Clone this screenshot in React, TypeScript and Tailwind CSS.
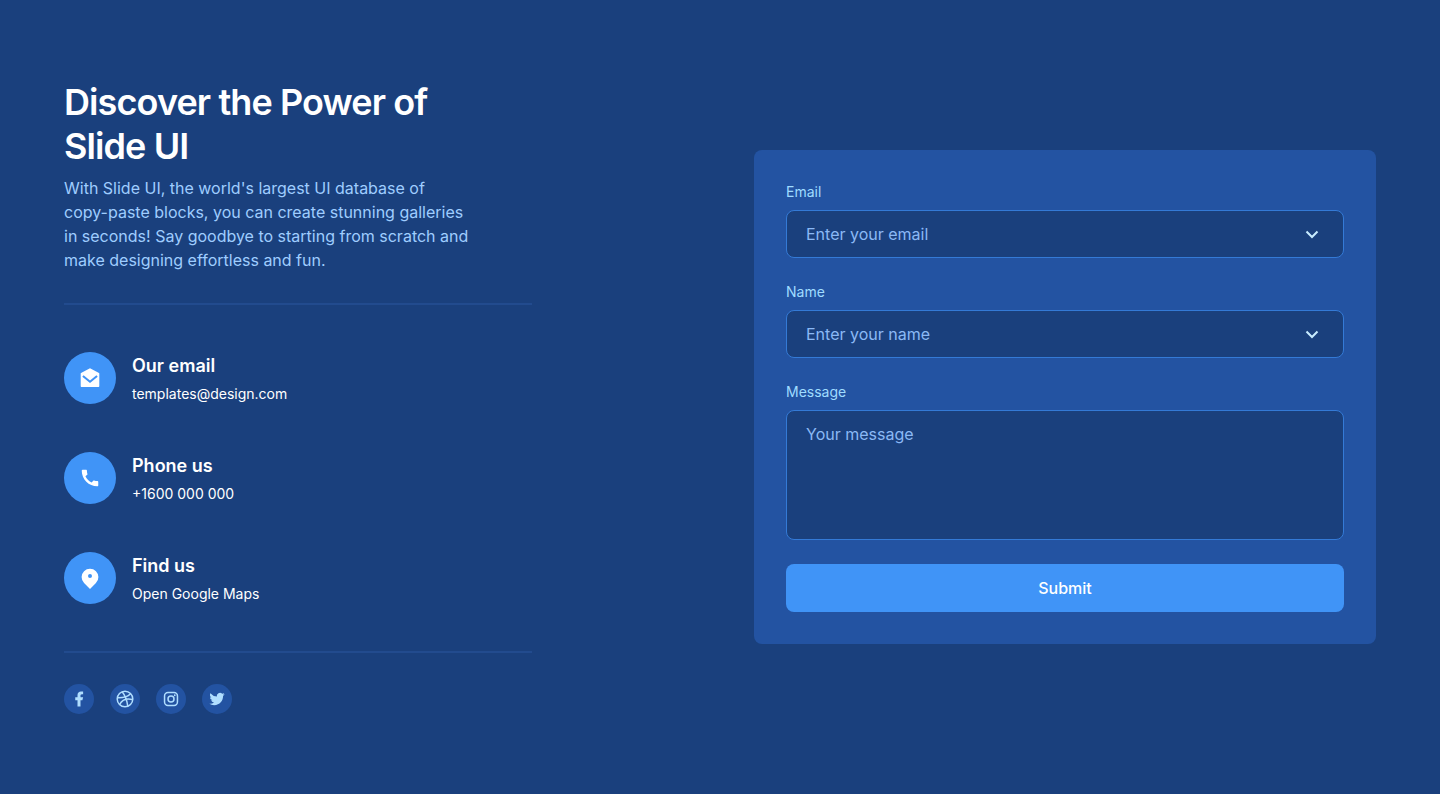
import React, { useState } from 'react';

const contacts = [
  {
    title: 'Our email',
    text: 'templates@design.com',
    href: 'mailto:templates@design.com',
    icon: (
      <svg className="w-6 h-6" viewBox="0 0 24 24" fill="currentColor" aria-hidden="true">
        <path fillRule="evenodd" d="M12 2.2 21 7.1c.2.1.3.3.3.5V20c0 .6-.4 1-1 1H3.7c-.6 0-1-.4-1-1V7.6c0-.2.1-.4.3-.5L12 2.2ZM5.6 9.2 4.3 10.8 12 17l7.7-6.2-1.3-1.6L12 14.4 5.6 9.2Z" />
      </svg>
    ),
  },
  {
    title: 'Phone us',
    text: '+1600 000 000',
    href: 'tel:+1600000000',
    icon: (
      <svg className="w-[22px] h-[22px]" viewBox="0 0 24 24" fill="currentColor" aria-hidden="true">
        <path d="M20.01 15.38c-1.23 0-2.42-.2-3.53-.56a.977.977 0 0 0-1.01.24l-1.57 1.97c-2.83-1.35-5.48-3.9-6.89-6.83l1.95-1.66c.27-.28.35-.67.24-1.02-.37-1.11-.56-2.3-.56-3.53 0-.54-.45-.99-.99-.99H4.19C3.65 3 3 3.24 3 3.99 3 13.28 10.73 21 20.01 21c.71 0 .99-.63.99-1.18v-3.45c0-.54-.45-.99-.99-.99Z" />
      </svg>
    ),
  },
  {
    title: 'Find us',
    text: 'Open Google Maps',
    href: '#maps',
    icon: (
      <svg className="w-6 h-6" viewBox="0 0 24 24" fill="currentColor" aria-hidden="true">
        <path fillRule="evenodd" d="M17.94 17.04 12 22.98l-5.94-5.94a8.4 8.4 0 1 1 11.88 0ZM12 12a2 2 0 1 0 0-4 2 2 0 0 0 0 4Z" />
      </svg>
    ),
  },
];

const socials = [
  {
    name: 'Facebook',
    icon: (
      <svg className="w-[18px] h-[18px]" viewBox="0 0 24 24" fill="currentColor" aria-hidden="true">
        <path d="M14 13.5h2.5l1-4H14v-2c0-1.03 0-2 2-2h1.5V2.14c-.326-.043-1.557-.14-2.857-.14C11.928 2 10 3.657 10 6.7v2.8H7v4h3V22h4v-8.5Z" />
      </svg>
    ),
  },
  {
    name: 'Dribbble',
    icon: (
      <svg className="w-[18px] h-[18px]" viewBox="0 0 24 24" fill="none" stroke="currentColor" strokeWidth="2" aria-hidden="true">
        <circle cx="12" cy="12" r="10.4" />
        <path d="M8.2 2.4c3.8 4.6 6.2 10 7.5 19M1.9 10.4c6.6.2 13-.8 17.5-5.4M4.8 19.4c3-5.8 9.6-8.6 17.4-6.6" />
      </svg>
    ),
  },
  {
    name: 'Instagram',
    icon: (
      <svg className="w-[18px] h-[18px]" viewBox="0 0 24 24" fill="none" stroke="currentColor" strokeWidth="2" aria-hidden="true">
        <rect x="3.4" y="3.4" width="17.2" height="17.2" rx="4.6" />
        <circle cx="12" cy="12" r="4" />
        <circle cx="17" cy="7" r="1.2" fill="currentColor" stroke="none" />
      </svg>
    ),
  },
  {
    name: 'Twitter',
    icon: (
      <svg className="w-[18px] h-[18px]" viewBox="0 0 24 24" fill="currentColor" aria-hidden="true">
        <path d="M22.162 5.656a8.384 8.384 0 0 1-2.402.658A4.196 4.196 0 0 0 21.6 4c-.82.488-1.719.83-2.656 1.015a4.182 4.182 0 0 0-7.126 3.814 11.874 11.874 0 0 1-8.62-4.37 4.168 4.168 0 0 0-.566 2.103c0 1.45.738 2.731 1.86 3.481a4.168 4.168 0 0 1-1.894-.523v.052a4.185 4.185 0 0 0 3.355 4.101 4.21 4.21 0 0 1-1.89.072A4.185 4.185 0 0 0 7.97 16.65a8.394 8.394 0 0 1-6.191 1.732 11.83 11.83 0 0 0 6.41 1.88c7.693 0 11.9-6.373 11.9-11.9 0-.18-.005-.362-.013-.54a8.496 8.496 0 0 0 2.087-2.165Z" />
      </svg>
    ),
  },
];

const fields = [
  { id: 'email', label: 'Email', type: 'email', placeholder: 'Enter your email' },
  { id: 'name', label: 'Name', type: 'text', placeholder: 'Enter your name' },
];

const App: React.FC = () => {
  const [values, setValues] = useState<Record<string, string>>({ email: '', name: '', message: '' });

  const update = (id: string, value: string) => setValues({ ...values, [id]: value });

  return (
    <main className="min-h-screen bg-[#1a407d] px-6 md:px-16 py-20 font-['Inter',sans-serif] text-white">
      <div className="grid lg:grid-cols-2 gap-[68px] items-center">
        <section className="max-w-[468px]">
          <h1 className="max-w-[406px] text-4xl leading-[44px] font-semibold tracking-tight">Discover the Power of Slide UI</h1>
          <p className="mt-2 max-w-[406px] text-base text-[#9fcdff]">
            With Slide UI, the world's largest UI database of copy-paste blocks, you can create stunning galleries in seconds! Say goodbye to starting from scratch and make designing effortless and fun.
          </p>

          <div className="mt-[31px] py-[47px] border-y-2 border-[#224b8e] space-y-12">
            {contacts.map((c) => (
              <div key={c.title} className="flex items-center gap-4">
                <div className="w-[52px] h-[52px] rounded-full bg-[#4094f7] flex items-center justify-center shrink-0">
                  {c.icon}
                </div>
                <div>
                  <h2 className="text-lg font-semibold">{c.title}</h2>
                  <a href={c.href} className="block mt-1 text-sm">{c.text}</a>
                </div>
              </div>
            ))}
          </div>

          <div className="mt-[31px] flex gap-4">
            {socials.map((s) => (
              <a key={s.name} href={`#${s.name.toLowerCase()}`} aria-label={s.name} className="w-[30px] h-[30px] rounded-full bg-[#2353a2] text-[#b0deff] flex items-center justify-center">
                {s.icon}
              </a>
            ))}
          </div>
        </section>

        <form onSubmit={(e) => e.preventDefault()} className="bg-[#2353a2] rounded-lg p-8 space-y-6">
          {fields.map((f) => (
            <div key={f.id}>
              <label htmlFor={f.id} className="block mb-2 text-sm text-[#9fdcff]">{f.label}</label>
              <div className="flex items-center h-12 px-[19px] rounded-lg border border-[#347ad6] bg-[#1a407d]">
                <input
                  id={f.id}
                  type={f.type}
                  value={values[f.id]}
                  onChange={(e) => update(f.id, e.target.value)}
                  placeholder={f.placeholder}
                  className="flex-1 min-w-0 bg-transparent outline-none text-base placeholder:text-[#8bb9f5]"
                />
                <button type="button" aria-label={`${f.label} suggestions`} className="text-[#c8ecff]">
                  <svg className="w-6 h-6" viewBox="0 0 24 24" fill="none" stroke="currentColor" strokeWidth="2" aria-hidden="true">
                    <path d="m6.5 9.5 5.5 5.5 5.5-5.5" />
                  </svg>
                </button>
              </div>
            </div>
          ))}

          <div>
            <label htmlFor="message" className="block mb-2 text-sm text-[#9fdcff]">Message</label>
            <textarea
              id="message"
              value={values.message}
              onChange={(e) => update('message', e.target.value)}
              placeholder="Your message"
              className="block w-full h-[130px] px-[19px] py-[11px] rounded-lg border border-[#347ad6] bg-[#1a407d] outline-none resize-none text-base placeholder:text-[#8bb9f5]"
            />
          </div>

          <button type="submit" className="block w-full h-12 rounded-lg bg-[#4094f7] text-base font-medium">Submit</button>
        </form>
      </div>
    </main>
  );
};

export default App;
